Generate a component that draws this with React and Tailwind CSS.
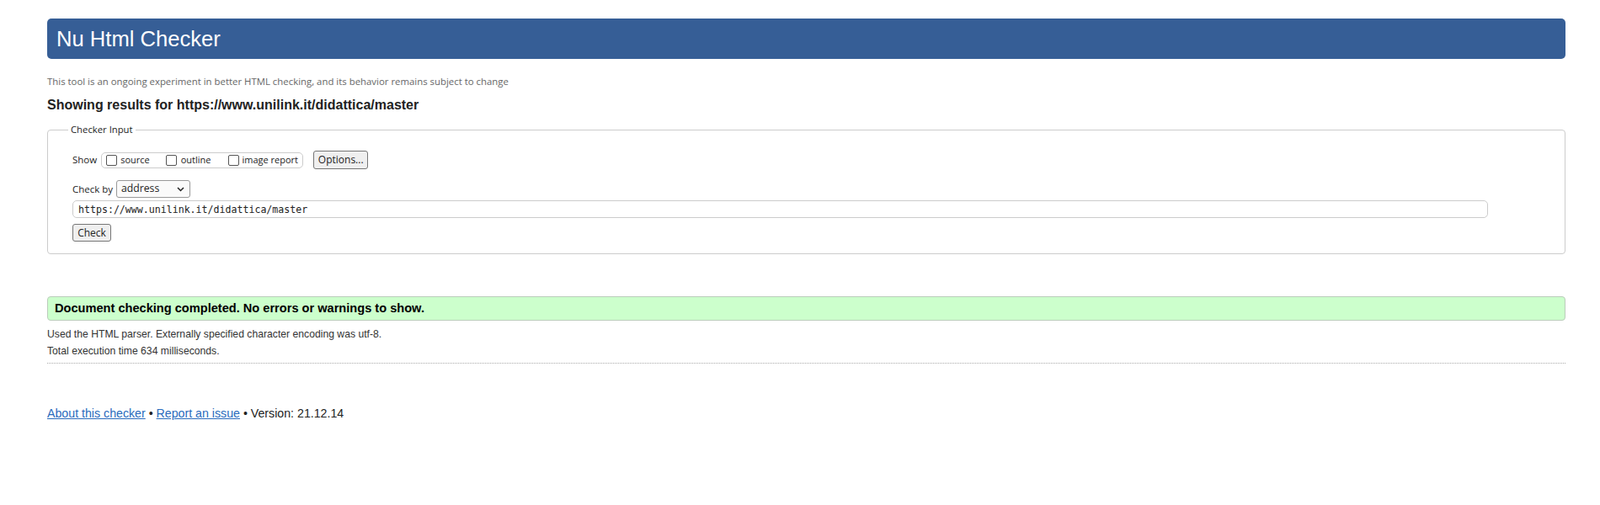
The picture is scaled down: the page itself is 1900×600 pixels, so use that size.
import { useState } from 'react';

function Box({ checked, onToggle }) {
  return (
    <span
      onClick={onToggle}
      className="inline-block w-[13px] h-[13px] border border-[#555] rounded-[2px] bg-white shrink-0"
    >
      {checked && <span className="block w-full h-full bg-[#0075ff]" />}
    </span>
  );
}

export default function App() {
  const [show, setShow] = useState({ source: false, outline: false, images: false });
  const [url, setUrl] = useState('https://www.unilink.it/didattica/master');

  const toggle = (k) => setShow((s) => ({ ...s, [k]: !s[k] }));

  return (
    <div className="min-h-[600px] bg-white text-[#222] font-['Liberation_Sans',Arial,sans-serif]">
      <div className="ml-[56px] w-[1803px] pt-[22px]">
        <h1 className="h-[48px] rounded-[5px] bg-[#365e96] text-white text-[25.6px] flex items-center pl-[11px] font-normal">
          Nu Html Checker
        </h1>

        <p className="mt-[19px] text-[11.4px] leading-[16px] text-[#666] font-['Open_Sans',sans-serif]">
          This tool is an ongoing experiment in better HTML checking, and its behavior remains subject to change
        </p>

        <h2 className="mt-[10px] text-[16px] leading-[19px] font-bold">
          Showing results for https://www.unilink.it/didattica/master
        </h2>

        <fieldset className="mt-[12px] border border-[#ccc] rounded-[4px] pl-[29px] pr-[29px] pb-[14px] font-['Open_Sans',sans-serif] text-[11.5px]">
          <legend className="ml-[-5px] px-[3px] text-[11.3px] leading-[16px] text-[#222]">Checker Input</legend>

          <div className="mt-[17px] flex items-center h-[22px]">
            <span>Show</span>
            <div className="ml-[5px] w-[240px] h-[19px] border border-[#ccc] rounded-[5px] flex items-center pl-[5px] text-[11px]">
              <Box checked={show.source} onToggle={() => toggle('source')} />
              <span className="ml-[4px]">source</span>
              <span className="ml-[19px] flex"><Box checked={show.outline} onToggle={() => toggle('outline')} /></span>
              <span className="ml-[5px]">outline</span>
              <span className="ml-[20px] flex"><Box checked={show.images} onToggle={() => toggle('images')} /></span>
              <span className="ml-[4px]">image report</span>
            </div>
            <button
              type="button"
              className="ml-[12px] w-[65px] h-[22px] bg-[#efefef] border border-[#767676] rounded-[3px] text-[12px]"
            >
              Options...
            </button>
          </div>

          <div className="mt-[13px] flex items-center h-[21px]">
            <span>Check by</span>
            <div className="ml-[4px] w-[88px] h-[21px] border border-[#999] rounded-[3px] bg-[#fafafa] flex items-center justify-between pl-[5px] pr-[6px] text-[12.2px]">
              <span>address</span>
              <svg width="9" height="6" viewBox="0 0 9 6" fill="none" stroke="#222" strokeWidth="1.5">
                <path d="M1 1l3.5 3.5L8 1" />
              </svg>
            </div>
          </div>

          <input
            value={url}
            onChange={(e) => setUrl(e.target.value)}
            className="mt-[3px] block w-[1681px] h-[21px] border border-[#ccc] rounded-[5px] px-[6px] text-[11.6px] text-[#222] font-['DejaVu_Sans_Mono',monospace] outline-none"
          />

          <button
            type="button"
            className="mt-[7px] block w-[46px] h-[21px] bg-[#efefef] border border-[#767676] rounded-[3px] text-[12px]"
          >
            Check
          </button>
        </fieldset>

        <div className="mt-[50px] h-[29px] bg-[#ccffcc] border border-[#bbccbb] rounded-[4px] flex items-center pl-[8px]">
          <p className="text-[14.6px] font-bold text-black">
            Document checking completed. No errors or warnings to show.
          </p>
        </div>

        <p className="mt-[6px] text-[12.2px] leading-[20px] text-[#333]">
          Used the HTML parser. Externally specified character encoding was utf-8.
        </p>
        <p className="text-[12.2px] leading-[20px] text-[#333]">Total execution time 634 milliseconds.</p>

        <div className="mt-[4px] border-t border-dotted border-[#aaa]" />

        <p className="mt-[51px] text-[14.2px] leading-[17px] text-[#222]">
          <a href="#about" className="text-[#2a6bbd] underline">About this checker</a>
          {' • '}
          <a href="#issue" className="text-[#2a6bbd] underline">Report an issue</a>
          {' • Version: 21.12.14'}
        </p>
      </div>
    </div>
  );
}
